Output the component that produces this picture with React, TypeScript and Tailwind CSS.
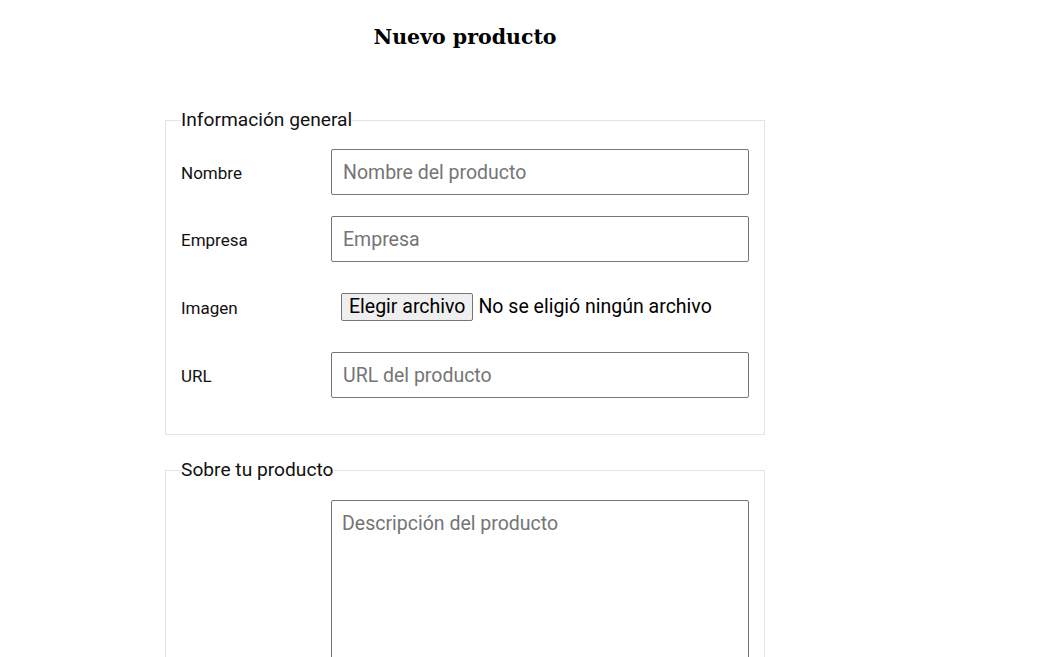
import React from "react";

const body = { fontFamily: "Roboto, 'Noto Sans', sans-serif" };

const inputCls =
  "w-[418px] h-[46px] border border-[#767676] rounded-[2px] px-[11px] text-[19.5px] placeholder:text-[#757575] outline-none";

function Row({ label, children, h = "h-[46px]", mb = "mb-[21px]" }: { label: string; children: React.ReactNode; h?: string; mb?: string }) {
  return (
    <div className={`flex items-center ${h} ${mb}`}>
      <label className="w-[150px] shrink-0 text-[17px] leading-[22px] pt-[1px] text-[#111]">{label}</label>
      {children}
    </div>
  );
}

export default function App() {
  return (
    <div className="min-h-screen bg-white text-[#111]" style={body}>
      <div className="ml-[165px] w-[600px] pt-[22px] pb-10">
        <h1
          className="text-center text-[20.5px] leading-[30px] font-bold text-black"
          style={{ fontFamily: "'DejaVu Serif', 'Liberation Serif', serif" }}
        >
          Nuevo producto
        </h1>

        <fieldset className="mt-[57px] border border-[#e3e3e3] pl-[15px] pr-[15px] pt-[18px] pb-[15px]">
          <legend className="px-0 text-[19.2px] leading-[22px] text-[#111]">Información general</legend>
          <Row label="Nombre">
            <input type="text" placeholder="Nombre del producto" className={inputCls} />
          </Row>
          <Row label="Empresa">
            <input type="text" placeholder="Empresa" className={inputCls} />
          </Row>
          <Row label="Imagen" h="h-[48px]">
            <div className="flex items-center pl-[10px] text-[19.5px]">
              <button
                type="button"
                className="h-[28px] px-[7px] bg-[#efefef] border border-[#767676] rounded-[2px] text-[19.5px] leading-[26px] text-black"
              >
                Elegir archivo
              </button>
              <span className="ml-[5px] text-black">No se eligió ningún archivo</span>
            </div>
          </Row>
          <Row label="URL" mb="mb-[21px]">
            <input type="text" placeholder="URL del producto" className={inputCls} />
          </Row>
        </fieldset>

        <fieldset className="mt-[24px] border border-[#e3e3e3] pl-[15px] pr-[15px] pt-[19px] pb-[15px]">
          <legend className="px-0 text-[19.2px] leading-[22px] text-[#111]">Sobre tu producto</legend>
          <div className="flex">
            <div className="w-[150px] shrink-0" />
            <textarea
              placeholder="Descripción del producto"
              className="w-[418px] h-[200px] border border-[#767676] rounded-[2px] px-[10px] py-[8px] text-[19.5px] placeholder:text-[#757575] outline-none resize-none"
            />
          </div>
        </fieldset>
      </div>
    </div>
  );
}
